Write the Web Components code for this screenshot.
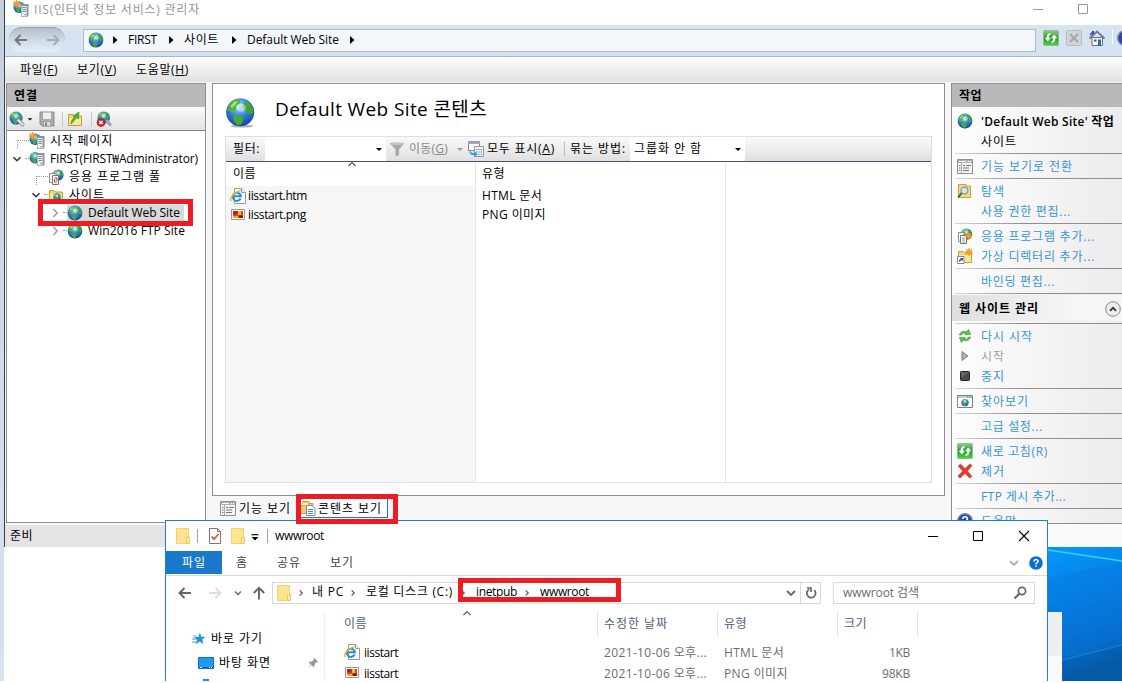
<!DOCTYPE html>
<html lang="ko">
<head>
<meta charset="utf-8">
<title>IIS(인터넷 정보 서비스) 관리자</title>
<style>
    html, body { margin: 0; background: #fff; }
    body {
        width: 1122px;
        height: 683px;
        overflow: hidden;
        font: 12px/18px "Open Sans", "Noto Sans CJK KR", sans-serif;
        color: #000;
    }
</style>
</head>
<body>
<desk-top>
    <iis-window></iis-window>
    <explorer-window></explorer-window>
    <red-mark style="left:38px;top:199px;width:155px;height:27px"></red-mark>
    <red-mark style="left:296px;top:494px;width:102px;height:30px"></red-mark>
    <red-mark style="left:458px;top:578px;width:163px;height:24px"></red-mark>
</desk-top>

<script>
const define = (name, html, setup) => {
    const template = document.createElement('template');
    template.innerHTML = html;
    customElements.define(name, class extends HTMLElement {
        constructor() {
            super();
            this.attachShadow({mode: 'open'}).appendChild(template.content.cloneNode(true));
        }
        connectedCallback() {
            if (setup) setup(this, this.shadowRoot);
        }
    });
};

const globe = (x, y, s) => `<g transform="translate(${x} ${y}) scale(${s})">
    <circle cx="8" cy="8" r="7.4" fill="url(#sea)"/>
    <path d="M2 4.5 4.5 1.8 7.5 1.2 8 3.2 6 4.6 5.6 6.8 3.6 8 1.4 7z" fill="#52b435"/>
    <path d="M9.8 3.2 12.4 2.6 14.6 5.4 14.8 8.6 12.8 9.4 11 7.2 9.4 5.6z" fill="#3fa52e"/>
    <path d="M4 10.2 7.4 9.6 9.8 11 8.8 14.2 6.6 15 5 13z" fill="#48ab2f"/>
    <path d="M3 4.6 5 2.4 6.8 2.2 5.4 4.2 3.6 5.8z" fill="#a9e070"/>
    <ellipse cx="8.4" cy="5.6" rx="2.6" ry="2.2" fill="#fff" opacity=".45"/></g>`;
const server = (x, y) => `<g transform="translate(${x} ${y})">
    <path d="M0 1.5 2 0H7.5V11.5L6 13H0z" fill="#8c939c"/><path d="M.6 2H5.6V12.4H.6z" fill="#eceff2"/>
    <path d="M1.4 3.5H4.8M1.4 5.5H4.8M1.4 7.5H4.8" stroke="#7d858f"/><path d="M3.6 10h1.2v1.2H3.6z" fill="#3a9d3a"/></g>`;
const folder = `<path d="M1.5 3.5H6L7.5 5H14.5V14.5H1.5z" fill="#f3d57c" stroke="#c99b3b"/><path d="M2 7H14V14H2z" fill="#fbe7a0"/>`;
const burst = (x, y) => `<path transform="translate(${x} ${y})" d="M0-4 .9-1.6 3-3 1.8-.8 4 0 1.8.8 3 3 .9 1.6 0 4-.9 1.6-3 3-1.8.8-4 0-1.8-.8-3-3-.9-1.6z" fill="#f7a21b" stroke="#e47d10" stroke-width=".4"/>`;

const icons = {
    globe: globe(0, 0, 1),
    bigglobe: `<ellipse cx="8.8" cy="15" rx="6" ry=".8" fill="#000" opacity=".3"/>` + globe(0, 0, .98),
    iis: globe(0, 0, .78) + burst(3.6, 3) + server(8, 3),
    host: globe(0, .5, .78) + server(8, 2),
    connect: globe(0, 0, .88) + `<path d="M9.5 9.5 13.5 13.5" stroke="#8b97a6" stroke-width="4" stroke-linecap="round"/><path d="M9.5 9.5 13.5 13.5" stroke="#dfe6ee" stroke-width="2.4" stroke-linecap="round"/>`,
    disconnect: globe(1, 0, .84) + `<path d="M11 10 14 13.5" stroke="#9aa7b8" stroke-width="3.4" stroke-linecap="round"/><circle cx="5" cy="11.5" r="4" fill="#d22b22" stroke="#9e130f" stroke-width=".6"/><path d="M3.4 9.9 6.6 13.1M6.6 9.9 3.4 13.1" stroke="#fff" stroke-width="1.4"/>`,
    save: `<path d="M1 1H15V15H3L1 13z" fill="#aaa" stroke="#8c8c8c"/><path d="M4 1.5H12V8H4z" fill="#eee"/><path d="M4.5 10.5H11.5V15H4.5z" fill="#ddd" stroke="#8c8c8c" stroke-width=".6"/><path d="M6 11.5H8V15H6z" fill="#888"/>`,
    up: folder + `<path d="M4 13C4 10 5 8 7.5 6.5L6 5 12 1 11.5 8 9.8 6.8C8 8 7 10.5 4 13z" fill="#50b82d" stroke="#2e8b17" stroke-width=".6"/>`,
    pool: globe(4, 0, .75) + `<path d="M1.5 4.5H8V13.5H1.5z" fill="#fff" stroke="#8b8b8b"/><path d="M4.5 6.5H10.5V15.5H4.5z" fill="#fff" stroke="#777"/><path d="M6.5 10V13H9M9 12V9H6.5" fill="none" stroke="#c33"/>`,
    sites: folder + globe(5, 6, .5),
    html: `<path d="M4.5.5H11.5L15.5 4.5V15.5H4.5z" fill="#fff" stroke="#9a9a9a"/><path d="M11.5.5V4.5H15.5" fill="#eee" stroke="#9a9a9a"/>
        <path d="M10.6 10.4A4.1 4.1 0 1 1 10.9 8.2H3.4" fill="none" stroke="#1e90d8" stroke-width="2"/><path d="M1.4 13C-.8 11 3 4.4 11 2.6" fill="none" stroke="#efb61c" stroke-width="1.4"/>`,
    png: `<path d="M1.5 2.5H14.5V12.5H1.5z" fill="#fff" stroke="#999"/><path d="M3 4H13V11H3z" fill="#e2491a"/><path d="M3 4H7.5V7.5H3z" fill="#b81f1c"/><path d="M8 4H11V8H8z" fill="#f8b62b"/><path d="M9 8.5H13V11H9z" fill="#831712"/><path d="M3 9H8V11H3z" fill="#f6a821"/>`,
    filter: `<path d="M1 2.5C1 1 15 1 15 2.5L10 8.5V14L6.5 15.5V8.5z" fill="#a9a9a9"/><ellipse cx="8" cy="2.8" rx="6" ry="1.2" fill="#c8c8c8"/>`,
    showall: `<path d="M.5.5H11.5V9.5H.5z" fill="#fff" stroke="#7e8b98"/><path d="M.5.5H11.5V3H.5z" fill="#9eabb8"/><path d="M6.5 5.5H15.5V15.5H6.5z" fill="#f5f8fb" stroke="#8a97a5"/><path d="M8 8.5h6M8 11h6M8 13.3h6" stroke="#5c78a8" stroke-dasharray="1.4 .9"/><path d="M2 8C2 11 3 12 6 12V10L9.5 13 6 16V14C2.5 14 .5 12 2 8z" fill="#2a9bd6"/>`,
    features: `<path d="M.5 1.5H15.5V15.5H.5z" fill="#f4f4f4" stroke="#8f8f8f"/><path d="M1 2H15V5H1z" fill="#b3b3b3"/><path d="M2 3.5H9M11 3.5h1M13 3.5h1" stroke="#fff"/><path d="M4.5 5V15" stroke="#aaa"/><path d="M2 7.5H3.5M2 10H3.5M2 12.5H3.5M6 7.5H8M6 10H12M6 12.5H12M9 7.5H14" stroke="#777"/>`,
    content: `<path d="M.5 5.5H3V1.5H9V3.5H13V13.5H.5z" fill="#efca6b" stroke="#c79b3a"/><path d="M3 3H8V5H3z" fill="#fff2c0"/><path d="M6.5 5.5H12L15 8.5V15.5H6.5z" fill="#fff" stroke="#7b8ba0"/><path d="M8 9.5H13M8 11.5H13M8 13.5H13" stroke="#4b8bd0"/>`,
    explore: `<path d="M1.5 1.5H9V3H13.5V14.5H1.5z" fill="#f5da80" stroke="#c8a040"/><path d="M5 9.5 1.2 14.5" stroke="#555" stroke-width="2"/><circle cx="7.5" cy="7.5" r="3.4" fill="#cfe8f8" stroke="#8897a6" stroke-width="1.2"/>`,
    addapp: globe(3.4, 0, .76) + `<path d="M1.5 4.5H7V13.5H1.5z" fill="#fff" stroke="#888"/><path d="M3.5 7.5H9.5V15.5H3.5z" fill="#fff" stroke="#777"/><path d="M5 10H8M5 12H8M5 14H8" stroke="#999"/>` + burst(11.5, 8),
    adddir: folder + `<path d="M.5 8.5H7V15.5H.5z" fill="#fff" stroke="#888"/><path d="M2 14V12L4 11 3 10H6V13L5 12z" fill="#2850b8"/>` + burst(12, 4),
    restart: `<path d="M2.5 7C3 3.6 7 2.2 9.6 3.8L11.6 1.4 13.6 6.6H8L9.1 5.6C7 4.8 5.4 5.4 4.4 7z" fill="#5cc44c" stroke="#2c9425" stroke-width=".6"/><path d="M13.5 9C13 12.4 9 13.8 6.4 12.2L4.4 14.6 2.4 9.4H8L6.9 10.4C9 11.2 10.6 10.6 11.6 9z" fill="#5cc44c" stroke="#2c9425" stroke-width=".6"/>`,
    start: `<path d="M5 3.5 11 8 5 12.5z" fill="#b3b3b3" stroke="#808080"/>`,
    stop: `<rect x="3.5" y="3.5" width="9" height="9" rx="1" fill="#4a4a4a" stroke="#222"/><path d="M4 4H12L4 10z" fill="#777" opacity=".6"/>`,
    browse: `<path d="M.5 2.5H15.5V14.5H.5z" fill="#fff" stroke="#7c8188"/><path d="M1 3H15V5H1z" fill="#c6ccd4"/><path d="M10 4h1M12 4h1M14 4h.8" stroke="#555"/>` + globe(4, 5.6, .5),
    refresh: `<rect x=".5" y=".5" width="15" height="15" rx="1" fill="url(#grn)" stroke="#9bb59b"/><path d="M7.6 3C4.5 3.4 3.4 5.4 3.6 7.8H1.6L4.8 11.4 8 7.8H5.9C5.8 6 6.2 5 7.6 4.5z" fill="#fff"/><path d="M8.4 13C11.5 12.6 12.6 10.6 12.4 8.2H14.4L11.2 4.6 8 8.2H10.1C10.2 10 9.8 11 8.4 11.5z" fill="#fff"/>`,
    nostop: `<rect x=".5" y=".5" width="15" height="15" rx="1" fill="#d3d4d6" stroke="#b9babd"/><path d="M4 4 12 12M12 4 4 12" stroke="#a8a9ac" stroke-width="2.4"/>`,
    home: `<path d="M3 7.5H13.5V15.5H3z" fill="#f4f4f8" stroke="#6b6f80"/><path d="M3 1H5V5H3z" fill="#3546b8"/><path d="M.5 8.5 8 1.5 15.5 8.5" fill="none" stroke="#6d7894" stroke-width="1.8"/><path d="M1 5 4 2" stroke="#3546d8" stroke-width="1.4"/><path d="M9 9.5H12V15.5H9z" fill="#2a65b0"/><path d="M5 9.5H7.5V11.5H5z" fill="#555"/>`,
    remove: `<path d="M1.2 3.2 3.4 1 8 5.6 13 1 15 2.6 10.4 8 15 13.4 12.6 15 8 10.4 3 15.2 1 13 5.8 8z" fill="#e33a34" stroke="#b4201c" stroke-width=".5"/>`,
    help: `<circle cx="8" cy="8" r="7.3" fill="#2745b5" stroke="#858b98" stroke-width="1.4"/><path d="M5.6 6C5.8 3 10.6 3 10.4 6 10.2 7.8 8 7.6 8 9.6M8 11.2V12.6" fill="none" stroke="#fff" stroke-width="1.7"/>`,
    help2: `<circle cx="8" cy="8" r="7.8" fill="#0b6fd0"/><path d="M5.8 6.2C5.8 3.4 10.4 3.4 10.3 6.2 10.2 7.8 8 7.6 8 9.6M8 10.8V12.6" fill="none" stroke="#fff" stroke-width="1.7"/>`,
    file: `<path d="M1.5.5H13.5V15.5H1.5z" fill="#ffe38f" stroke="#f3d16f"/><path d="M11.5 9.5H14.5V15.5H11.5z" fill="#ffe9a6" stroke="#efc555"/>`,
    check: `<path d="M2.5.5H10.5L13.5 3.5V15.5H2.5z" fill="#fff" stroke="#777"/><path d="M10.5.5V3.5H13.5" fill="none" stroke="#777"/><path d="M4.6 8.6 7 11.2 11.6 6" fill="none" stroke="#ea5b1c" stroke-width="1.8"/>`,
    star: `<path d="M9 .5 10.6 5.4H15.4L11.8 8.6 13 13.8 8.8 10.8 4.2 14 5.8 9 2.2 5.8H7.2z" fill="#2592dc"/><path d="M1 4.5H5M0 8H5M0 11.5H5" stroke="#2592dc" stroke-width="1"/>`,
    monitor: `<path d="M.5 2.5H15.5V13.5H.5z" fill="#1e9bf0" stroke="#0c6fc0"/><path d="M1 12.5H15" stroke="#0b5ca8"/><path d="M2 12.5h2M11 12.5h1M13 12.5h1" stroke="#fff"/>`,
    pin: `<path d="M9.5 1 15 6.5 13.6 7.2 12.6 6.8 10 9.6 10 12.5 8.6 13.4 5.8 10.4 1.5 14.6 5 9.6 2.6 7.2 3.6 6 6.4 6.2 9.2 3.6 8.6 2.2z" fill="#8b95a0"/>`,
    min: `<path d="M3 8.5H13" stroke="currentColor"/>`,
    max: `<path d="M3.5 3.5H12.5V12.5H3.5z" fill="none" stroke="currentColor"/>`,
    close: `<path d="M3 3 13 13M13 3 3 13" stroke="currentColor" stroke-width="1.1"/>`,
    left: `<path d="M2.5 8H14M7.5 3 2.5 8 7.5 13" fill="none" stroke="currentColor" stroke-width="1.9"/>`,
    right: `<path d="M2 8H13.5M8.5 3 13.5 8 8.5 13" fill="none" stroke="currentColor" stroke-width="1.9"/>`,
    upward: `<path d="M8 14.5V3M2.8 8 8 2.8 13.2 8" fill="none" stroke="currentColor" stroke-width="1.9"/>`,
    play: `<path d="M6 4 10.5 8 6 12z"/>`,
    drop: `<path d="M5 7H11L8 10z" fill="currentColor"/>`,
    qdrop: `<path d="M4 6.5H12" stroke="#000" stroke-width="1.3"/><path d="M4 9H12L8 13z"/>`,
    chevd: `<path d="M4 6 8 10 12 6" fill="none" stroke="currentColor" stroke-width="1.8"/>`,
    chevr: `<path d="M6 3.5 10.5 8 6 12.5" fill="none" stroke="currentColor" stroke-width="1.8"/>`,
    crumb: `<path d="M6.5 5 9.3 8 6.5 11" fill="none" stroke="#666" stroke-width="1.6"/>`,
    caret: `<path d="M4.5 10 8 6.5 11.5 10" fill="none" stroke="#555" stroke-width="1.1"/>`,
    reload: `<path d="M11.2 5A4.4 4.4 0 1 1 6 4.4M4 3H8V7" fill="none" stroke="#666" stroke-width="1.7"/>`,
    search: `<circle cx="10" cy="6" r="3.6" fill="none" stroke="#666" stroke-width="1.7"/><path d="M7.4 8.6 2.5 13.5" stroke="#666" stroke-width="2.2"/>`,
    collapse: `<circle cx="8" cy="8" r="7.3" fill="#eee" stroke="#8b8b8b"/><path d="M5 9.8 8 6.8 11 9.8" fill="none" stroke="#333" stroke-width="1.8"/>`
};

define('ui-icon', `<style>
    :host { display: block; flex: none; width: 16px; height: 16px; }
    svg { display: block; width: 100%; height: 100%; overflow: visible; }
</style><svg viewBox="0 0 16 16"></svg>`, (el, root) => {
    root.querySelector('svg').innerHTML = `<defs>
        <radialGradient id="sea" cx=".45" cy=".3" r=".75"><stop offset="0" stop-color="#9fdcf5"/><stop offset=".5" stop-color="#2f7fd6"/><stop offset="1" stop-color="#143a9c"/></radialGradient>
        <linearGradient id="grn" x2="0" y2="1"><stop offset="0" stop-color="#8fd088"/><stop offset=".5" stop-color="#1f9c22"/><stop offset="1" stop-color="#3ee03a"/></linearGradient>
    </defs>` + (icons[el.getAttribute('name')] || '');
    const size = el.getAttribute('size');
    if (size) el.style.width = el.style.height = size + 'px';
});

// thin vertical separator
define('v-line', `<style>
    :host { display: block; flex: none; width: 1px; height: 14px; background: #a0a0a0; }
</style>`);

// annotation frame drawn over the windows
define('red-mark', `<style>
    :host { position: absolute; box-sizing: border-box; border: 5px solid #ec1c24; z-index: 5; }
</style>`);

define('tree-row', `<style>
    :host { display: flex; align-items: center; height: 18px; line-height: 16px; padding-left: var(--indent, 0px); }
    .arrow { width: 14px; height: 14px; margin: 2px -1px 0; color: #333; }
    .arrow.closed { color: #a0a0a0; }
    .arrow.none { visibility: hidden; }
    .dots { width: 4px; margin-left: 2px; border-top: 1px dotted #999; }
    .arrow.none + .dots { box-sizing: border-box; width: 12px; height: 9px; margin-left: -6px; align-self: flex-end; border-left: 1px dotted #999; }
    .text { display: flex; align-items: center; height: 17px; padding-right: 4px; margin-top: 1px; }
    .text.on { background: linear-gradient(#d9d9d9, #d9d9d9) no-repeat 0 1px; }
    .icon { margin-right: 5px; }
    ::slotted(fit-text) { margin-top: 1px; }
</style><ui-icon class="arrow"></ui-icon><i class="dots"></i><span class="text"><ui-icon class="icon"></ui-icon><slot></slot></span>`, (el, root) => {
    const arrow = root.querySelector('.arrow');
    const icon = root.querySelector('.icon');
    arrow.setAttribute('name', el.hasAttribute('open') ? 'chevd' : 'chevr');
    arrow.classList.toggle('none', el.hasAttribute('leaf'));
    arrow.classList.toggle('closed', !el.hasAttribute('open'));
    icon.setAttribute('name', el.getAttribute('icon'));
    root.querySelector('.text').classList.toggle('on', el.hasAttribute('selected'));
    arrow.connectedCallback();
    icon.connectedCallback();
});

define('action-group', `<style>
    :host { display: block; padding: 2px 0; }
    :host::before { content: ""; display: block; height: 1px; margin: -2px 0 2px 3px; background: linear-gradient(90deg, #d8d8d8, #8e8e8e 40%); }
</style><slot></slot>`);

define('action-row', `<style>
    :host { display: flex; align-items: center; height: 20px; padding-left: 5px; color: #3795d3; line-height: 18px; }
    :host([off]) { color: #a0a0a0; }
    ui-icon, i { width: 16px; margin-right: 8px; }
    ::slotted(fit-text) { margin-top: 2px; }
</style><i></i><slot></slot>`, (el, root) => {
    const name = el.getAttribute('icon');
    if (!name) return;
    const icon = document.createElement('ui-icon');
    icon.setAttribute('name', name);
    root.querySelector('i').replaceWith(icon);
});

define('iis-title', `<style>
    :host { display: flex; height: 25px; color: #969696; background: #fff; }
</style>
<ui-icon name="iis" style="margin:1px 5px 0 8px"></ui-icon><fit-text w="166" style="line-height:20px">IIS(인터넷 정보 서비스) 관리자</fit-text>
<ui-icon name="min" style="margin:1px 29px 0 auto"></ui-icon><ui-icon name="max" style="margin:1px 31px 0 0"></ui-icon>`);

define('iis-address', `<style>
    :host { display: flex; align-items: flex-start; height: 32px; box-sizing: border-box; background: #d6e4f1; border-bottom: 1px solid #a9b5c4; overflow: hidden; }
    .pill { display: flex; flex: none; align-items: center; justify-content: space-between; box-sizing: border-box; width: 56px; height: 25px; margin: 2px 18px 0 4px; padding: 0 4px; border-radius: 13px; background: linear-gradient(#b4bfcd, #cfdae6 50%, #e8f0f8); border-top: 1px solid #97a3b2; }
    .box { display: flex; flex: none; align-items: center; box-sizing: border-box; width: 953px; height: 23px; margin-top: 4px; padding-left: 4px; border: 1px solid #afb9ca; background: #f3f7fb; }
    .box > * { margin-right: 7px; }
    .box ui-icon { margin-top: -1px; }
    .box fit-text { margin-top: -2px; }
    .tools { display: flex; flex: none; gap: 7px; margin: 5px 0 0 7px; }
</style>
<div class="pill"><ui-icon name="left" style="color:#777"></ui-icon><ui-icon name="right" style="color:#a5aeb8"></ui-icon></div>
<div class="box">
    <ui-icon name="globe" style="margin-right:3px"></ui-icon><ui-icon name="play" style="margin-right:5px"></ui-icon>
    <fit-text w="29" style="margin-right:6px">FIRST</fit-text><ui-icon name="play" style="margin-right:5px"></ui-icon>
    <fit-text w="35">사이트</fit-text><ui-icon name="play" style="margin-right:5px"></ui-icon>
    <fit-text w="92" style="margin-right:5px">Default Web Site</fit-text><ui-icon name="play"></ui-icon>
</div>
<div class="tools"><ui-icon name="refresh"></ui-icon><ui-icon name="nostop"></ui-icon><ui-icon name="home"></ui-icon><v-line style="background:#fff"></v-line><ui-icon name="help" style="margin-left:-3px"></ui-icon></div>`);

define('iis-menu', `<style>
    :host { display: flex; height: 25px; line-height: 26px; padding-left: 15px; background: linear-gradient(#fdfdfd, #e2e2e2); }
    fit-text { margin-right: 19px; }
</style><fit-text w="38">파일(<u>F</u>)</fit-text><fit-text w="40">보기(<u>V</u>)</fit-text><fit-text w="53">도움말(<u>H</u>)</fit-text>`);

define('connection-pane', `<style>
    :host { display: flex; flex-direction: column; box-sizing: border-box; width: 200px; height: 440px; border: 1px solid #8d8d91; background: #fff; }
    header { height: 23px; line-height: 23px; padding-left: 7px; background: #bbb8bc; }
    .bar { display: flex; align-items: center; height: 23px; padding-left: 2px; background: linear-gradient(#fbfbfb, #e3e1e4); border-bottom: 1px solid #84848c; }
</style>
<header><fit-text w="24" bold>연결</fit-text></header>
<div class="bar">
    <ui-icon name="connect"></ui-icon><ui-icon name="drop" size="12" style="margin-left:-1px"></ui-icon><ui-icon name="save" style="margin-left:3px"></ui-icon>
    <v-line style="margin:0 4px 0 7px;background:#c9c7b8"></v-line><ui-icon name="up"></ui-icon>
    <v-line style="margin:0 4px 0 8px;background:#c9c7b8"></v-line><ui-icon name="disconnect"></ui-icon>
</div>
<tree-row leaf icon="iis" style="--indent:4px"><fit-text w="63">시작 페이지</fit-text></tree-row>
<tree-row open icon="host" style="--indent:4px"><fit-text w="148">FIRST(FIRST₩Administrator)</fit-text></tree-row>
<tree-row leaf icon="pool" style="--indent:23px"><fit-text w="92">응용 프로그램 풀</fit-text></tree-row>
<tree-row open icon="sites" style="--indent:23px"><fit-text w="36">사이트</fit-text></tree-row>
<tree-row selected icon="globe" style="--indent:42px"><fit-text w="92">Default Web Site</fit-text></tree-row>
<tree-row icon="globe" style="--indent:42px"><fit-text w="97">Win2016 FTP Site</fit-text></tree-row>`);

define('content-grid', `<style>
    :host { display: flex; flex-direction: column; box-sizing: border-box; width: 707px; height: 347px; border: 1px solid #dfdfe3; }
    .bar { display: flex; align-items: center; height: 24px; background: linear-gradient(#fafafa, #e0dee1); border-bottom: 1px solid #4d5272; }
    .combo { display: flex; align-items: center; justify-content: flex-end; align-self: stretch; background: #fff; }
    .cols { display: flex; flex: 1; }
    .col { flex: none; width: 249px; border-right: 1px solid #e4e8ee; }
    .col:last-child { flex: 1; border: 0; }
    .col.sorted { background: #f6f6f6; }
    .head { display: flex; height: 24px; line-height: 23px; padding-left: 7px; background: #fff; }
    .cell { display: flex; align-items: center; height: 19px; padding-left: 6px; line-height: 19px; }
    .sorted .cell { padding-left: 4px; }
</style>
<div class="bar">
    <fit-text w="27" style="margin:0 5px 0 7px">필터:</fit-text>
    <div class="combo" style="width:121px"><ui-icon name="drop" style="margin-right:-1px"></ui-icon></div>
    <ui-icon name="filter" style="margin:0 4px 0 3px"></ui-icon><fit-text w="39" style="color:#8a8a8a;margin-right:4px">이동(<u>G</u>)</fit-text>
    <ui-icon name="drop" style="color:#999"></ui-icon><ui-icon name="showall" style="margin-right:3px"></ui-icon><fit-text w="68">모두 표시(<u>A</u>)</fit-text>
    <v-line style="margin:0 5px 0 9px;background:#bdbba8"></v-line><fit-text w="56" style="margin-right:4px">묶는 방법:</fit-text>
    <div class="combo" style="width:115px;justify-content:space-between"><fit-text w="68" style="margin-left:4px">그룹화 안 함</fit-text><ui-icon name="drop" style="margin-right:-1px"></ui-icon></div>
</div>
<div class="cols">
    <div class="col sorted">
        <div class="head"><fit-text w="23">이름</fit-text><ui-icon name="caret" style="margin:-6px 0 0 88px"></ui-icon></div>
        <div class="cell"><ui-icon name="html" style="margin-right:2px"></ui-icon><fit-text w="59">iisstart.htm</fit-text></div>
        <div class="cell"><ui-icon name="png" style="margin-right:2px"></ui-icon><fit-text w="58">iisstart.png</fit-text></div>
    </div>
    <div class="col">
        <div class="head" style="padding-left:6px"><fit-text w="23">유형</fit-text></div>
        <div class="cell"><fit-text w="60">HTML 문서</fit-text></div>
        <div class="cell"><fit-text w="64">PNG 이미지</fit-text></div>
    </div>
    <div class="col"></div>
    <div class="col"></div>
</div>`);

define('center-pane', `<style>
    :host { display: block; width: 733px; margin-left: 6px; }
    .sheet { box-sizing: border-box; height: 413px; border: 1px solid #8d8d91; background: #fff; padding-left: 12px; }
    .title { display: flex; align-items: center; height: 52px; font-size: 19px; line-height: 48px; }
    .tabs { display: flex; height: 24px; align-items: center; padding-left: 8px; }
    .tab { display: flex; align-items: center; box-sizing: border-box; height: 20px; border: 1px solid transparent; line-height: 16px; }
    .tab fit-text { margin-top: 2px; }
    .tab.on { background: #fff; border-color: #1879c8; width: 92px; margin-left: 4px; padding-left: 3px; }
</style>
<div class="sheet">
    <div class="title"><ui-icon name="bigglobe" size="31" style="margin:4px 19px 0 0"></ui-icon><fit-text w="212" style="margin-top:-2px">Default Web Site 콘텐츠</fit-text></div>
    <content-grid></content-grid>
</div>
<div class="tabs">
    <div class="tab"><ui-icon name="features" style="margin:0 3px 0 -1px"></ui-icon><fit-text w="52">기능 보기</fit-text></div>
    <div class="tab on"><ui-icon name="content" style="margin-right:2px"></ui-icon><fit-text w="64">콘텐츠 보기</fit-text></div>
</div>`);

define('section-head', `<style>
    :host { display: flex; align-items: center; justify-content: space-between; height: 25px; margin: -1px 0 2px; padding: 1px 1px 0 7px; background: linear-gradient(90deg, #dededf, #f6f6f6 70%); }
</style><slot></slot><ui-icon name="collapse"></ui-icon>`);

define('action-pane', `<style>
    :host { display: block; box-sizing: border-box; width: 171px; height: 441px; margin-left: 6px; overflow: hidden; border: 1px solid #8d8d91; border-right: 0; background: linear-gradient(90deg, #fdfdfd, #ececee); }
    header { height: 23px; line-height: 23px; padding-left: 7px; margin-bottom: 4px; background: #bbb8bc; }
    .black { color: #000; }
</style>
<header><fit-text w="23" bold>작업</fit-text></header>
<action-row icon="globe" class="black"><fit-text w="133" bold>'Default Web Site' 작업</fit-text></action-row>
<action-row class="black" style="margin-bottom:2px"><fit-text w="36">사이트</fit-text></action-row>
<action-group><action-row icon="features"><fit-text w="92">기능 보기로 전환</fit-text></action-row></action-group>
<action-group><action-row icon="explore"><fit-text w="24">탐색</fit-text></action-row><action-row><fit-text w="90">사용 권한 편집...</fit-text></action-row></action-group>
<action-group><action-row icon="addapp"><fit-text w="114">응용 프로그램 추가...</fit-text></action-row><action-row icon="adddir"><fit-text w="114">가상 디렉터리 추가...</fit-text></action-row></action-group>
<action-group><action-row><fit-text w="74">바인딩 편집...</fit-text></action-row></action-group>
<action-group><section-head><fit-text w="80" bold>웹 사이트 관리</fit-text></section-head></action-group>
<action-group style="margin-top:-2px"><action-row icon="restart"><fit-text w="52">다시 시작</fit-text></action-row><action-row icon="start" off><fit-text w="24">시작</fit-text></action-row><action-row icon="stop"><fit-text w="24">중지</fit-text></action-row></action-group>
<action-group><action-row icon="browse"><fit-text w="48">찾아보기</fit-text></action-row></action-group>
<action-group><action-row><fit-text w="62">고급 설정...</fit-text></action-row></action-group>
<action-group><action-row icon="refresh"><fit-text w="67">새로 고침(R)</fit-text></action-row><action-row icon="remove"><fit-text w="24">제거</fit-text></action-row></action-group>
<action-group><action-row><fit-text w="85">FTP 게시 추가...</fit-text></action-row></action-group>
<action-group><action-row icon="help"><fit-text w="36">도움말</fit-text></action-row></action-group>`);

define('iis-window', `<style>
    :host { position: absolute; left: 4px; top: 0; width: 1118px; height: 547px; box-sizing: border-box; border-left: 1px solid #3c4046; background: #f7f7f7; overflow: hidden; }
    .body { display: flex; align-items: flex-start; height: 441px; padding: 1px 0 0 1px; }
    footer { height: 22px; line-height: 21px; margin-top: 1px; padding-left: 5px; background: linear-gradient(90deg, #e5e3e5, #e5e3e5 20%, #fafafa 60%); }
</style>
<iis-title></iis-title><iis-address></iis-address><iis-menu></iis-menu>
<div class="body"><connection-pane></connection-pane><center-pane></center-pane><action-pane></action-pane></div>
<footer><fit-text w="23">준비</fit-text></footer>`);

define('explorer-address', `<style>
    :host { display: flex; align-items: center; height: 34px; padding: 0 0 1px 11px; }
    .box { display: flex; align-items: center; box-sizing: border-box; height: 22px; border: 1px solid #d9d9d9; line-height: 18px; }
    .path { width: 549px; margin: 0 12px 0 5px; padding-left: 3px; }
    .path fit-text { margin-top: -2px; }
    .search { width: 202px; padding: 0 6px 0 9px; justify-content: space-between; color: #6d6d6d; }
    .nav { color: #666; }
    .path > * { margin-right: 4px; }
    .path ui-icon[name=crumb] { width: 14px; margin-left: -1px; }
</style>
<ui-icon class="nav" name="left"></ui-icon><ui-icon class="nav" name="right" style="color:#ddd;margin-left:14px"></ui-icon>
<ui-icon class="nav" name="chevd" size="12" style="margin:0 7px 0 9px"></ui-icon><ui-icon class="nav" name="upward"></ui-icon>
<div class="box path">
    <ui-icon name="file" style="margin-right:3px"></ui-icon><ui-icon name="crumb" style="margin-right:4px"></ui-icon>
    <fit-text w="32" style="margin-right:3px">내 PC</fit-text><ui-icon name="crumb" style="margin-right:6px"></ui-icon>
    <fit-text w="87">로컬 디스크 (C:)</fit-text><ui-icon name="crumb" style="margin-right:6px"></ui-icon>
    <fit-text w="41">inetpub</fit-text><ui-icon name="crumb" style="margin-right:6px"></ui-icon>
    <fit-text w="49">wwwroot</fit-text>
    <ui-icon name="chevd" style="color:#666;margin:0 1px 0 auto"></ui-icon><v-line style="height:20px;background:#d9d9d9;margin-right:2px"></v-line><ui-icon name="reload" style="margin-right:1px"></ui-icon>
</div>
<div class="box search"><fit-text w="76">wwwroot 검색</fit-text><ui-icon name="search"></ui-icon></div>`);

define('explorer-list', `<style>
    :host { display: grid; grid-template-columns: 254px 120px 120px 80px; align-content: start; margin-left: 19px; }
    .head { display: flex; height: 26px; line-height: 25px; margin-bottom: 5px; border-right: 1px solid #e3e3e3; color: #4c607a; }
    .pad { padding-left: 6px; }
    .cell { display: flex; align-items: center; height: 21px; line-height: 21px; color: #6d6d6d; }
    .name { color: #000; }
    .name ui-icon { margin: -1px 4px 0 0; }
    .size { justify-content: flex-end; padding-right: 8px; }
</style>
<div class="head"><fit-text w="23">이름</fit-text><ui-icon name="caret" style="margin:-6px 0 0 92px"></ui-icon></div>
<div class="head pad"><fit-text w="64">수정한 날짜</fit-text></div>
<div class="head pad"><fit-text w="23">유형</fit-text></div>
<div class="head pad"><fit-text w="23">크기</fit-text></div>
<div class="cell name"><ui-icon name="html"></ui-icon><fit-text w="34">iisstart</fit-text></div>
<div class="cell pad"><fit-text w="103">2021-10-06 오후...</fit-text></div>
<div class="cell pad"><fit-text w="60">HTML 문서</fit-text></div>
<div class="cell size"><fit-text w="21">1KB</fit-text></div>
<div class="cell name"><ui-icon name="png"></ui-icon><fit-text w="34">iisstart</fit-text></div>
<div class="cell pad"><fit-text w="103">2021-10-06 오후...</fit-text></div>
<div class="cell pad"><fit-text w="64">PNG 이미지</fit-text></div>
<div class="cell size"><fit-text w="28">98KB</fit-text></div>`);

define('explorer-window', `<style>
    :host { position: absolute; left: 165px; top: 520px; width: 883px; height: 170px; box-sizing: border-box; border: 1px solid #1a80d4; background: #fff; }
    .title { display: flex; align-items: center; height: 30px; padding-left: 9px; }
    .tabs { display: flex; align-items: center; height: 23px; line-height: 22px; border-bottom: 1px solid #dadada; padding-bottom: 1px; color: #444; }
    .tabs b { align-self: stretch; width: 56px; box-sizing: border-box; padding-left: 16px; line-height: 24px; background: #1979ca; color: #fff; font-weight: normal; }
    .body { display: flex; }
    nav { width: 159px; height: 72px; margin-top: 1px; border-right: 1px solid #eee; box-sizing: border-box; padding-top: 15px; }
    .row { display: flex; align-items: center; height: 24px; }
</style>
<div class="title">
    <ui-icon name="file"></ui-icon><v-line style="margin:0 9px 0 6px"></v-line><ui-icon name="check"></ui-icon>
    <ui-icon name="file" style="margin-left:7px"></ui-icon><ui-icon name="qdrop" size="14" style="margin:0 5px 0 2px"></ui-icon>
    <v-line style="margin-right:7px"></v-line><fit-text w="49">wwwroot</fit-text>
    <ui-icon name="min" style="margin:0 29px 0 auto"></ui-icon><ui-icon name="max" style="margin-right:30px"></ui-icon><ui-icon name="close" style="margin-right:15px"></ui-icon>
</div>
<div class="tabs">
    <b><fit-text w="24">파일</fit-text></b><fit-text w="12" style="margin-left:14px">홈</fit-text><fit-text w="24" style="margin-left:29px">공유</fit-text><fit-text w="24" style="margin-left:29px">보기</fit-text>
    <ui-icon name="chevd" style="color:#aaa;margin:0 7px 0 auto"></ui-icon><ui-icon name="help2" size="14" style="margin-right:4px"></ui-icon>
</div>
<explorer-address></explorer-address>
<div class="body">
    <nav>
        <div class="row"><ui-icon name="star" size="14" style="margin:0 5px 0 26px"></ui-icon><fit-text w="52">바로 가기</fit-text></div>
        <div class="row"><ui-icon name="monitor" style="margin:0 5px 0 32px"></ui-icon><fit-text w="52">바탕 화면</fit-text><ui-icon name="pin" size="12" style="margin-left:36px"></ui-icon></div>
        <div class="row" style="align-items:flex-start"><i style="width:6px;height:8px;background:#1c87d8;margin:4px 0 0 37px"></i></div>
    </nav>
    <explorer-list></explorer-list>
</div>`);

define('desk-top', `<style>
    :host { display: block; position: relative; width: 1122px; height: 681px; overflow: hidden; background: linear-gradient(#c4cfdf, #d3dfed 70%, #d6e2f0); }
    .page { position: absolute; left: 4px; top: 546px; width: 1058px; height: 140px; background: #fff; }
    .wall { position: absolute; left: 1048px; top: 547px; width: 74px; height: 134px; }
    .back { position: absolute; left: 1048px; top: 612px; width: 14px; height: 70px; background: linear-gradient(#efefef 44px, #f9f9fc 44px); }
</style>
<div class="page"></div>
<svg class="wall" viewBox="0 0 74 134">
    <defs><linearGradient id="sky" x2="0.2" y2="1"><stop offset="0" stop-color="#0597fb"/><stop offset=".35" stop-color="#0584e8"/><stop offset=".7" stop-color="#0570cf"/><stop offset="1" stop-color="#055aa6"/></linearGradient></defs>
    <path d="M0 0H74V134H0z" fill="url(#sky)"/><path d="M0 30 74 16V98L0 118z" fill="#0a78e0" opacity=".35"/>
    <path d="M0 3 74 14" stroke="#35d3f8" stroke-width="1.4"/><path d="M14 113 74 98" stroke="#2d8ede" opacity=".7"/>
</svg>
<div class="back"></div>
<slot></slot>`);

// Label with a set width: the letter spacing takes up the difference.
// Registered last, so that the fonts of all its ancestors are already in place.
define('fit-text', `<style>
    :host { display: block; flex: none; white-space: pre; }
    :host([bold]) { font-weight: 600; }
    span { display: inline-block; }
</style><span><slot></slot></span>`, (el, root) => {
    const span = root.querySelector('span');
    const width = Number(el.getAttribute('w'));
    el.style.width = width + 'px';
    span.style.letterSpacing = (width - span.getBoundingClientRect().width) / el.textContent.length + 'px';
});
</script>
</body>
</html>
